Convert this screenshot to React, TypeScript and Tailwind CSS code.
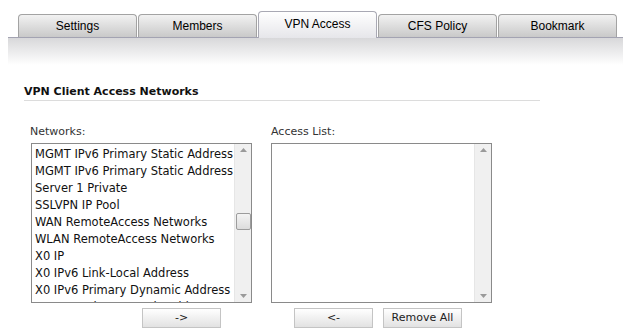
import React from 'react';

const tabs = ['Settings', 'Members', 'VPN Access', 'CFS Policy', 'Bookmark'];

const networks = [
  'MGMT IPv6 Primary Static Address',
  'MGMT IPv6 Primary Static Address',
  'Server 1 Private',
  'SSLVPN IP Pool',
  'WAN RemoteAccess Networks',
  'WLAN RemoteAccess Networks',
  'X0 IP',
  'X0 IPv6 Link-Local Address',
  'X0 IPv6 Primary Dynamic Address',
  'X0 IPv6 Primary Static Address',
];

function ScrollBar({ thumb }: { thumb?: boolean }) {
  return (
    <div className="relative w-[17px] shrink-0 bg-[#f0f0f0] border-l border-[#e6e6e6] flex flex-col items-center justify-between py-[4px]">
      <svg width="7" height="4" viewBox="0 0 7 4">
        <path d="M0 4 L3.5 0 L7 4 Z" fill="#9a9a9a" />
      </svg>
      {thumb && (
        <div className="absolute left-[1px] top-[69px] w-[15px] h-[17px] bg-gradient-to-b from-[#f4f4f4] to-[#dcdcdc] border border-[#9c9c9c] rounded-[2px]" />
      )}
      <svg width="7" height="4" viewBox="0 0 7 4">
        <path d="M0 0 L7 0 L3.5 4 Z" fill="#9a9a9a" />
      </svg>
    </div>
  );
}

function Button({ label, className }: { label: string; className?: string }) {
  return (
    <div
      className={`h-[20px] w-[79px] border border-[#c4c4c4] bg-gradient-to-b from-white to-[#e2e2e2] flex items-center justify-center text-[11px] text-[#222] ${className ?? ''}`}
    >
      {label}
    </div>
  );
}

export default function App() {
  return (
    <div className="w-[630px] h-[336px] bg-white overflow-hidden" style={{ fontFamily: 'Tahoma, "DejaVu Sans", sans-serif' }}>
      {/* Tabs */}
      <div className="flex items-end gap-px pl-[18px] pt-[11px] h-[37px] relative z-10" style={{ fontFamily: '"Liberation Sans", Arial, sans-serif' }}>
        {tabs.map((t) => {
          const active = t === 'VPN Access';
          return (
            <div
              key={t}
              className={
                active
                  ? 'w-[119px] h-[27px] -mb-px pb-[2px] rounded-t-[4px] border border-b-0 border-[#a9a9b4] bg-gradient-to-b from-white to-[#e6e6ea] flex items-center justify-center text-[12px] text-black'
                  : 'w-[119px] h-[23px] pb-px rounded-t-[4px] border border-b-0 border-[#a3a3a3] bg-gradient-to-b from-[#f2f2f2] to-[#c9c9c9] flex items-center justify-center text-[12px] text-black'
              }
            >
              {t}
            </div>
          );
        })}
      </div>
      <div className="mx-[8px] w-[615px] h-[28px] border-t border-[#a3a3b2] bg-gradient-to-b from-[#d8d8da] to-white" />

      {/* Section heading */}
      <div className="mt-[20px] ml-[24px] w-[516px] border-b border-[#dcdcdc] pb-px">
        <div className="text-[11px] font-bold text-[#111] leading-[14px]">VPN Client Access Networks</div>
      </div>

      {/* Lists */}
      <div className="flex mt-[24px] ml-[31px] gap-[19px]">
        <div className="flex flex-col">
          <div className="text-[11px] text-[#333] leading-[13px] mb-[5px] -ml-px">Networks:</div>
          <div className="w-[221px] h-[160px] border border-[#8a8a8a] flex overflow-hidden">
            <div className="flex-1 overflow-hidden pl-[3px] pt-[2px] h-[158px]">
              {networks.map((n, i) => (
                <div key={i} className="h-[17px] leading-[17px] text-[11.5px] text-[#111] whitespace-nowrap">
                  {n}
                </div>
              ))}
            </div>
            <ScrollBar thumb />
          </div>
          <Button label="->" className="ml-[111px] mt-[5px]" />
        </div>
        <div className="flex flex-col">
          <div className="text-[11px] text-[#333] leading-[13px] mb-[5px]">Access List:</div>
          <div className="w-[221px] h-[160px] border border-[#8a8a8a] flex overflow-hidden">
            <div className="flex-1" />
            <ScrollBar />
          </div>
          <div className="flex gap-[10px] mt-[5px] ml-[23px]">
            <Button label="<-" />
            <Button label="Remove All" />
          </div>
        </div>
      </div>
    </div>
  );
}
